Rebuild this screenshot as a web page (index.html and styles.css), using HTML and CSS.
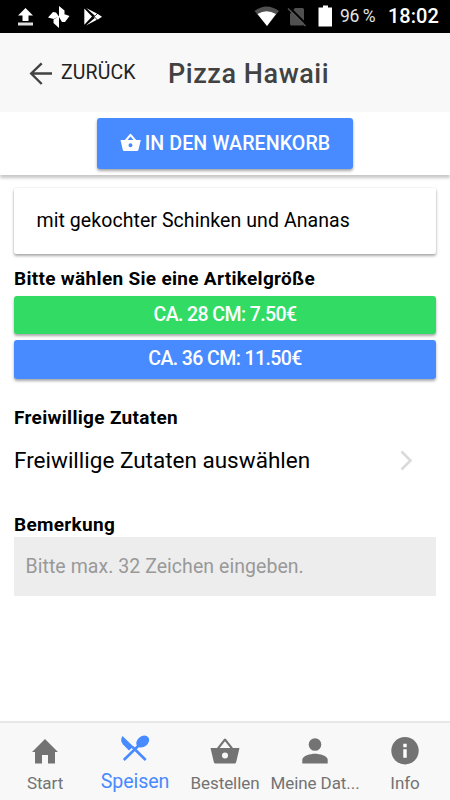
FILE: index.html
```html
<!DOCTYPE html>
<html lang="de">
<head>
<meta charset="utf-8">
<meta name="viewport" content="width=device-width, initial-scale=1">
<title>Pizza Hawaii</title>
<link rel="stylesheet" href="styles.css">
</head>
<body>
<div class="status">
  <svg class="st-left" width="90" height="24" viewBox="15 5 90 24">
    <path fill="#fff" d="M25.500 8L33 15.500H28.500V21H22.500V15.500H18Z"/>
    <path fill="#ddd" d="M18 22.500H33V25.500H18Z"/>
    <path fill="#fff" d="M59 16.500V6L64.500 10.500V14L59.500 16.500L64 14L69.500 16L65 22H62L59 17V28L53.500 23V19.500L58 17L53.500 19L48 17.500L53 12L56 12.500Z"/>
    <path fill="#fff" d="M84.300 8.500L92 16.500L84.300 24.800Z"/>
    <path fill="#fff" d="M86 8L97 13.500L95 15.700ZM86 25.500L97 19.700L95 17.700ZM93.300 16.700L97.500 13.700L102 16.700L97.500 19.700Z"/>
    <path fill="none" stroke="#000" stroke-width=".7" d="M85 7.500L98 20.500M85 26L98 13"/>
  </svg>
  <svg class="st-right" width="82" height="24" viewBox="254 5 82 24">
    <path fill="#505050" d="M254.500 11Q266.500 2 279 11L267 26Z"/>
    <path fill="#fff" d="M257.500 14Q266.500 8.500 276 14L267 26Z"/>
    <path fill="#505050" d="M290 14L295 8H302.500Q304 8 304 9.500V24Q304 25.500 302.500 25.500H291.500Q290 25.500 290 24Z"/>
    <path stroke="#000" stroke-width="2" d="M289.500 7.500L307 25"/>
    <path stroke="#555" stroke-width="1.400" d="M288 8.500L305.500 26"/>
    <path fill="#fff" d="M318.500 7.500H323V5.500H328V7.500H332V26.500H318.500Z"/>
  </svg>
  <span class="battery">96 %</span>
  <span class="clock">18:02</span>
</div>
<header class="header">
  <svg class="back-icon" width="24" height="24" viewBox="0 0 24 24" fill="none" stroke="#424242" stroke-width="2.400"><path d="M23 12.500H2.500M12.700 2.300L2.200 12.500L12.700 23"/></svg>
  <span class="back">ZURÜCK</span>
  <h1 class="title">Pizza Hawaii</h1>
</header>
<div class="cart-bar">
  <button class="btn cart">
    <svg width="22" height="20" viewBox="0 0 22 20"><path fill="#fff" fill-rule="evenodd" d="M.5 7H4.800L9.700 1.200Q10.500.2 11.300 1.200L16.200 7H20.800L18.400 17Q18.200 18 17 18H4.200Q3 18 2.800 17ZM7.500 7H13.500L10.500 3.400ZM10.500 10.200A2 2 0 1 0 10.500 14.200A2 2 0 1 0 10.500 10.200Z"/></svg>
    <span>IN DEN WARENKORB</span>
  </button>
</div>
<main class="content">
  <div class="card"><span class="desc">mit gekochter Schinken und Ananas</span></div>
  <h2 class="label size-label">Bitte wählen Sie eine Artikelgröße</h2>
  <button class="btn size green"><span>CA. 28 CM: 7.50€</span></button>
  <button class="btn size blue"><span>CA. 36 CM: 11.50€</span></button>
  <h2 class="label extra-label">Freiwillige Zutaten</h2>
  <div class="select"><span>Freiwillige Zutaten auswählen</span>
    <svg width="14" height="22" viewBox="0 0 14 22" fill="none" stroke="#dadada" stroke-width="2.600"><path d="M2.500 2.500L11.500 11.500L2.500 20.500"/></svg>
  </div>
  <h2 class="label note-label">Bemerkung</h2>
  <div class="note"><span>Bitte max. 32 Zeichen eingeben.</span></div>
</main>
<nav class="tabs">
  <a class="tab"><svg width="30" height="30" viewBox="0 0 30 30"><path fill="#737373" d="M5 28.500V17H2L15 4L28 17H25V28.500H18V20H12V28.500Z"/></svg><span>Start</span></a>
  <a class="tab active"><svg width="30" height="30" viewBox="0 0 30 30"><path fill="#488aff" d="M2.500 1L13.300 11.500L9 15.500L3 9.500Q-.5 5.500 2.500 1Z"/><ellipse cx="22.700" cy="6.600" rx="7" ry="5.300" transform="rotate(-38 22.700 6.600)" fill="#488aff"/><path fill="none" stroke="#488aff" stroke-width="2.600" d="M3.800 25L20 9.200M12.500 12L25.700 25"/></svg><span>Speisen</span></a>
  <a class="tab"><svg width="30" height="30" viewBox="0 0 30 30"><path fill="#737373" fill-rule="evenodd" d="M.5 13H7L14 4Q15 2.800 16 4L23 13H29.500L26.200 27Q25.900 28.500 24.500 28.500H5.500Q4.100 28.500 3.800 27ZM9.700 13H20.300L15 6.300ZM15 17.600A3 3 0 1 0 15 23.600A3 3 0 1 0 15 17.600Z"/></svg><span>Bestellen</span></a>
  <a class="tab"><svg width="30" height="30" viewBox="0 0 30 30"><circle cx="15" cy="9.500" r="6.300" fill="#737373"/><path fill="#737373" d="M2.300 28.500V24.800C2.300 20.800 10.500 18.800 15 18.800S27.700 20.800 27.700 24.800V28.500Z"/></svg><span>Meine Dat...</span></a>
  <a class="tab"><svg width="30" height="30" viewBox="0 0 30 30"><circle cx="15" cy="15.700" r="13.700" fill="#737373"/><path fill="#fff" d="M13.300 8.800H16.700V12.200H13.300ZM13.300 14.200H16.700V22.800H13.300Z"/></svg><span>Info</span></a>
</nav>
</body>
</html>
```
FILE: styles.css
```css
* { box-sizing: border-box; }
body { margin: 0; width: 450px; height: 800px; overflow: hidden; display: flex; flex-direction: column; background: #fff; font-family: Roboto, sans-serif; color: #000; }
h1, h2 { margin: 0; font-weight: 500; }
svg { display: block; flex: none; }
span, h1, h2 { white-space: nowrap; }
.status { height: 33px; flex: none; background: #000; display: flex; align-items: center; padding-left: 15px; color: #fff; }
.st-right { margin-left: 149px; }
.battery { width: 48px; margin-left: 4px; font-size: 17.500px; letter-spacing: -.4px; line-height: 33px; color: #e4e4e4; }
.clock { font-size: 20px; font-weight: 500; line-height: 33px; }
.header { height: 79px; flex: none; background: #f8f8f8; display: flex; align-items: center; padding-left: 29px; color: #424242; }
.back { margin-left: 8px; width: 107px; font-size: 19.500px; letter-spacing: .1px; line-height: 24px; color: #222; }
.title { font-size: 27px; letter-spacing: .55px; line-height: 34px; padding-top: 2px; }
.cart-bar { height: 63px; flex: none; display: flex; justify-content: center; align-items: flex-start; padding-top: 6px; box-shadow: 0 3px 3px rgba(0,0,0,.22); }
.btn { border: 0; margin: 0; padding: 0; font-family: inherit; font-weight: 500; color: #fff; border-radius: 3px; display: flex; justify-content: center; box-shadow: 0 2px 3px rgba(0,0,0,.35); background: #488aff; }
.cart { width: 256px; height: 51px; align-items: center; gap: 3px; font-size: 19.600px; letter-spacing: .07px; padding: 0 0 1px 0; }
.content { flex: 1; padding: 13px 14px 0; display: flex; flex-direction: column; }
.card { height: 66px; flex: none; display: flex; align-items: center; padding: 0 0 2px 22.500px; border-radius: 2px; box-shadow: 0 2px 3px rgba(0,0,0,.32), 0 0 2px rgba(0,0,0,.12); }
.desc { font-size: 19.500px; letter-spacing: .07px; }
.label { font-size: 19px; font-weight: 700; letter-spacing: .31px; line-height: 24px; }
.size-label { margin-top: 13px; }
.size { height: 38px; flex: none; font-size: 19.500px; letter-spacing: -.6px; line-height: 24px; padding-top: 7px; margin-top: 5px; }
.green { background: #32db64; }
.blue { height: 39px; margin-top: 6px; }
.extra-label { margin-top: 27px; }
.select { height: 61px; display: flex; justify-content: space-between; align-items: center; padding: 0 23px 2px 0; font-size: 22.500px; }
.note-label { margin-top: 22px; }
.note { height: 59px; background: #ededed; color: #999; display: flex; align-items: center; padding-left: 11.500px; font-size: 19.500px; letter-spacing: .05px; }
.tabs { height: 79px; flex: none; background: #f8f8f8; border-top: 2px solid #e7e7e7; display: grid; grid-template-columns: repeat(5, 1fr); }
.tab { display: flex; flex-direction: column; align-items: center; padding-top: 12px; color: #737373; font-size: 17px; letter-spacing: -.08px; }
.tab span { line-height: 24px; margin-top: 6px; }
.active { color: #488aff; font-size: 19.600px; }
.tab.active span { margin-top: 5px; }
```
